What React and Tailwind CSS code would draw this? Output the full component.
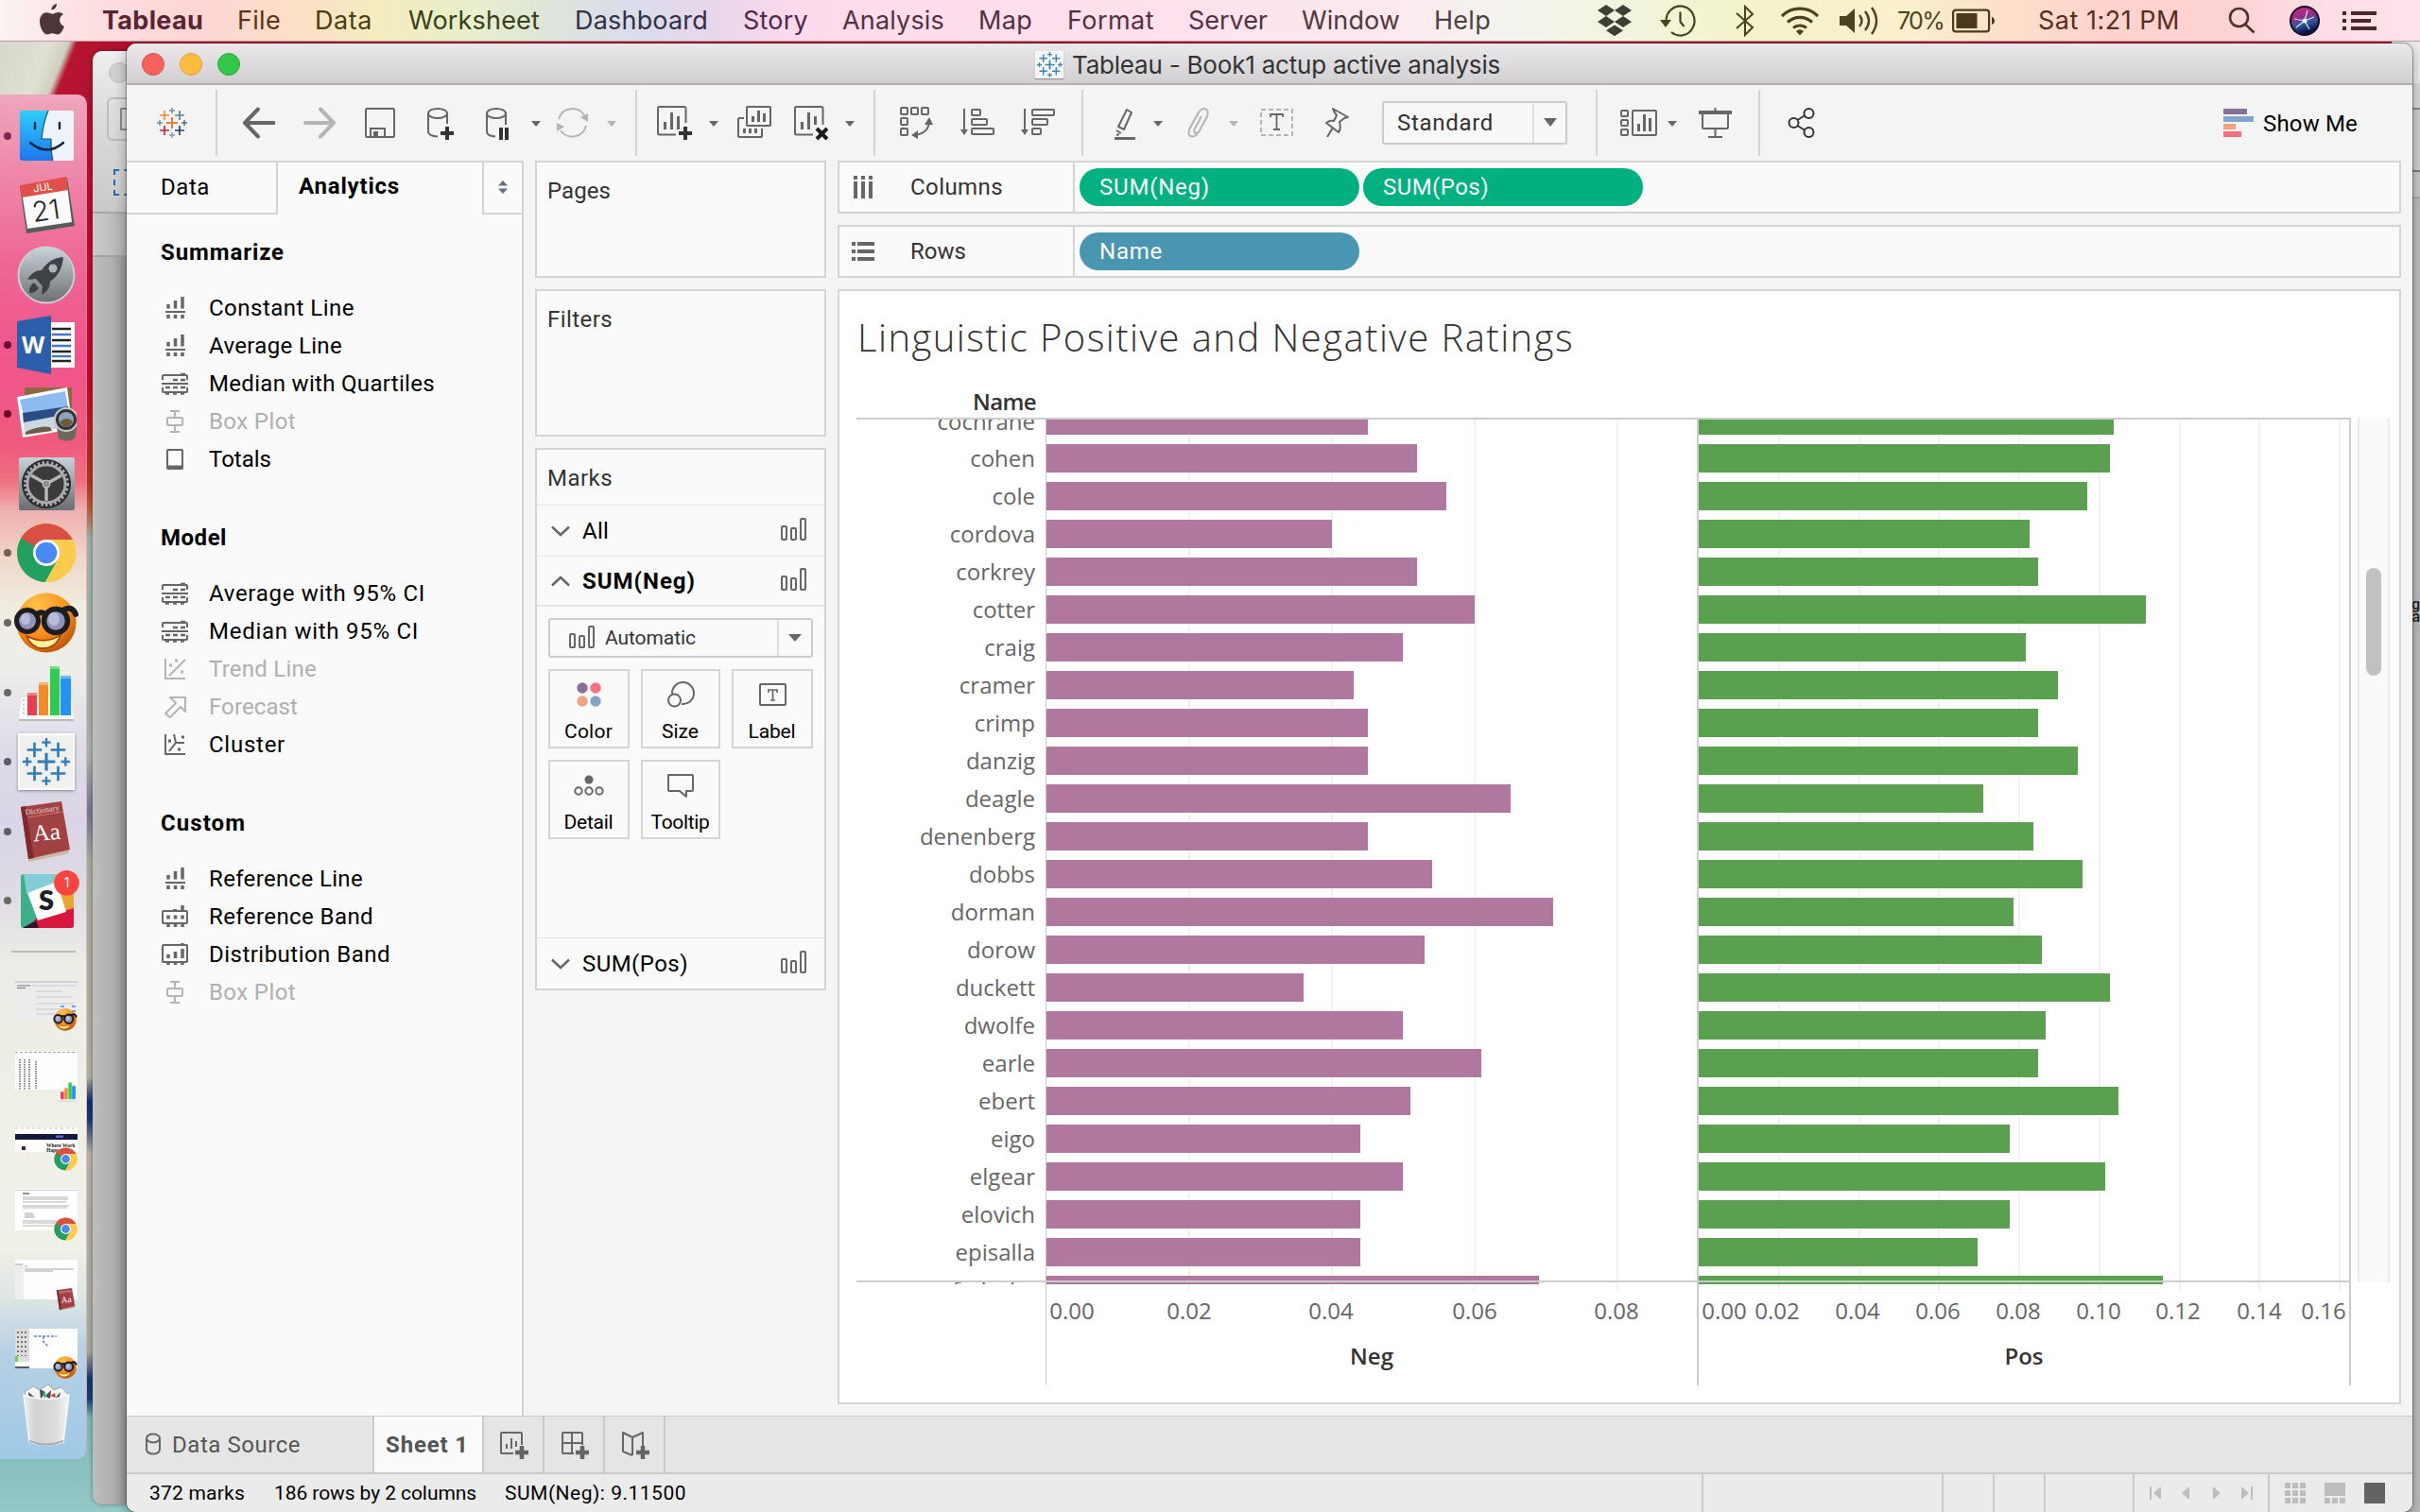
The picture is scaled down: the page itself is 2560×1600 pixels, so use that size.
import React, { useLayoutEffect, useRef, useState } from "react";

/* Single-line label whose tracking is set so that it fills `w` pixels. */
function T({ w, className = "", children }) {
  const ref = useRef(null);
  const [ls, setLs] = useState(0);
  useLayoutEffect(() => {
    const natural = ref.current.getBoundingClientRect().width;
    setLs((w + 2 - natural) / String(children).length);
  }, []);
  return (
    <span className={"block shrink-0 whitespace-nowrap " + className} style={{ width: w }}>
      <span ref={ref} className="-ml-px inline-block" style={{ letterSpacing: ls }}>
        {children}
      </span>
    </span>
  );
}

const G = "#666666";
const L = "#b4b4b4";

/* ---------- shared glyphs ---------- */

function Pluses({ colors, className }) {
  const pts = [
    [16, 16, 6, 2],
    [8, 8, 5, 1.7],
    [24, 8, 5, 1.7],
    [8, 24, 5, 1.7],
    [24, 24, 5, 1.7],
    [16, 3, 3, 1.5],
    [16, 29, 3, 1.5],
    [3, 16, 3, 1.5],
    [29, 16, 3, 1.5],
  ];
  return (
    <svg viewBox="0 0 32 32" className={className}>
      {pts.map(([x, y, r, s], i) => (
        <path key={i} d={`M${x - r} ${y}H${x + r}M${x} ${y - r}V${y + r}`} stroke={colors[i % colors.length]} strokeWidth={s} fill="none" />
      ))}
    </svg>
  );
}

const LOGO = ["#eb7b30", "#e8952c", "#4f8296", "#c8203a", "#1e3f76", "#7099a6", "#8d92b5", "#7099a6", "#5b6591"];

function I({ w, className = "", color = G, children }) {
  return (
    <svg width={w} height="48" viewBox={`0 0 ${w} 48`} fill="none" stroke={color} strokeWidth="2" className={"shrink-0 " + className}>
      {children}
    </svg>
  );
}

function Caret({ className = "", color = G }) {
  return (
    <svg width="10" height="48" viewBox="0 0 10 48" className={"shrink-0 " + className}>
      <path d="M0 22H10L5 28Z" fill={color} />
    </svg>
  );
}

const Sep = ({ className = "" }) => <div className={"h-[70px] w-[2px] shrink-0 bg-[#d4d4d4] " + className} />;

function BarsIcon({ className = "" }) {
  return (
    <svg width="28" height="26" viewBox="0 0 28 26" fill="none" stroke={G} strokeWidth="2" className={"shrink-0 " + className}>
      <rect x="1" y="10" width="5" height="14" rx="1" />
      <rect x="11" y="12" width="5" height="12" rx="1" />
      <rect x="21" y="2" width="5" height="22" rx="1" />
    </svg>
  );
}

/* ---------- menu bar ---------- */

function MenuBar() {
  return (
    <div className="absolute inset-x-0 top-0 flex h-[44px] items-center border-b border-[#b99aa5] bg-[linear-gradient(90deg,#faf3f0_0px,#fde0e2_90px,#fed5d6_200px,#fddcc8_290px,#f5ecc0_400px,#e8efcb_500px,#dbe3de_600px,#dadcec_680px,#ead6ea_760px,#fddbec_850px,#ffe1ee_1200px,#fbe8ee_1450px,#f4f4ee_1600px,#f2f4de_1720px,#f4f3c9_1850px,#faf0cc_2010px,#fddfca_2130px,#fed3cc_2220px,#fed2d4_2350px,#ffdde6_2460px,#ffe3ec_2560px)] pt-[1px] font-['Inter'] text-[27px] leading-[42px] text-[#3f2a31]">
      <svg width="28" height="34" viewBox="0 0 28 34" className="-mt-[4px] ml-[41px] shrink-0" fill="#4d3539">
        <path d="M19 1c.3 3-2.500 6.500-5.500 6.500C13 4.500 16 1.500 19 1zM26 12c-6 3.500-4.500 11 1 13-1.500 4-4 8.500-7 8.500-2 0-3-1.300-5.500-1.300S10.500 33.500 9 33.500C5 33.500 1 26 1 19.500c0-6 3.800-9.300 7.500-9.300 2.400 0 4.300 1.600 5.800 1.600 1.400 0 3.600-1.800 6.500-1.800 1.800 0 4 .8 5.200 2z" />
      </svg>
      <T w={105} className="ml-[40px] font-bold text-[#5a2430]">Tableau</T>
      <T w={44} className="ml-[38px] text-[#5c3418]">File</T>
      <T w={59} className="ml-[38px] text-[#4b3d10]">Data</T>
      <T w={137} className="ml-[40px] text-[#38401c]">Worksheet</T>
      <T w={139} className="ml-[39px] text-[#32304a]">Dashboard</T>
      <T w={67} className="ml-[39px] text-[#50284a]">Story</T>
      <T w={106} className="ml-[38px] text-[#56303f]">Analysis</T>
      <T w={55} className="ml-[38px] text-[#56303f]">Map</T>
      <T w={90} className="ml-[39px] text-[#56303f]">Format</T>
      <T w={82} className="ml-[38px] text-[#56303f]">Server</T>
      <T w={102} className="ml-[38px] text-[#543840]">Window</T>
      <T w={58} className="ml-[38px] text-[#4c4344]">Help</T>
      <svg width="38" height="34" viewBox="0 0 38 34" className="ml-[113px] shrink-0" fill="#3d3f33">
        <path d="M10 0l9 6-9 6-9-6zM28 0l9 6-9 6-9-6zM10 12l9 6-9 6-9-6zM28 12l9 6-9 6-9-6zM19 21.500l9 5.700-9 6-9-6z" />
      </svg>
      <svg width="38" height="36" viewBox="0 0 38 36" className="ml-[29px] shrink-0" fill="none" stroke="#46451c" strokeWidth="2.200">
        <path d="M6.500 18A15 15.500 0 1 1 12 30M21.500 8.500V19l4 5" />
        <path d="M0 17h12L6 25z" fill="#46451c" stroke="none" />
      </svg>
      <svg width="20" height="34" viewBox="0 0 20 34" className="ml-[42px] shrink-0" fill="none" stroke="#46451c" strokeWidth="2">
        <path d="M1 9l17 15-8 8V2l8 8L1 25" />
      </svg>
      <svg width="42" height="32" viewBox="0 0 42 32" className="ml-[27px] shrink-0" fill="none" stroke="#4b4320" strokeWidth="3.200">
        <path d="M2 11a27 27 0 0 1 38 0M8 17.500a19 19 0 0 1 26 0M14 23.500a11 11 0 0 1 14 0" />
        <path d="M17 27a5.500 5.500 0 0 1 8 0l-4 4.500z" fill="#4b4320" stroke="none" />
      </svg>
      <svg width="42" height="32" viewBox="0 0 42 32" className="ml-[21px] shrink-0" fill="none" stroke="#4b4320" strokeWidth="2.400">
        <path d="M0 11h7l9-8v26l-9-8H0z" fill="#4b4320" stroke="none" />
        <path d="M21 10q5 6 0 12M27 6q8 10 0 20M34 2q10 14 0 28" />
      </svg>
      <T w={47} className="ml-[20px] text-[25px] text-[#4b4320]">70%</T>
      <svg width="46" height="26" viewBox="0 0 46 26" className="ml-[10px] shrink-0" fill="none" stroke="#4d3c1c" strokeWidth="2.200">
        <rect x="1.100" y="1.600" width="38" height="22.800" rx="3" />
        <rect x="4.500" y="5" width="22" height="16" fill="#4d3c1c" stroke="none" />
        <path d="M42 9c4 1 4 7 0 8z" fill="#4d3c1c" stroke="none" />
      </svg>
      <T w={148} className="ml-[46px] text-[#5a2c1c]">Sat 1:21 PM</T>
      <svg width="30" height="30" viewBox="0 0 30 30" className="ml-[52px] shrink-0" fill="none" stroke="#54302f" strokeWidth="2.600">
        <circle cx="11.500" cy="11.500" r="9.500" />
        <path d="M18 18.500l9.500 9" />
      </svg>
      <svg width="32" height="32" viewBox="0 0 32 32" className="ml-[35px] shrink-0">
        <defs>
          <linearGradient id="siri" x1="0" y1="0" x2="0.300" y2="1">
            <stop offset="0" stopColor="#d0287c" />
            <stop offset="0.400" stopColor="#9b2a86" />
            <stop offset="0.700" stopColor="#2a5a9a" />
            <stop offset="1" stopColor="#101048" />
          </linearGradient>
        </defs>
        <circle cx="16" cy="16" r="16" fill="#140a22" />
        <circle cx="16" cy="16" r="14" fill="url(#siri)" />
        <path d="M16 16L19 5M16 16l10-4M16 16l5 9M16 16l-9 7M16 16L5 14" stroke="#cfeef8" strokeWidth="1.200" />
        <circle cx="16" cy="16" r="2.500" fill="#e8fbff" />
      </svg>
      <svg width="36" height="22" viewBox="0 0 36 22" className="ml-[24px] shrink-0" fill="#4c262d">
        <path d="M0 1h4v4H0zM9 1h27v4H9zM0 9h4v4H0zM9 9h21v4H9zM0 17h4v4H0zM9 17h27v4H9z" />
      </svg>
    </div>
  );
}

/* ---------- dock ---------- */

const Finder = () => (
  <svg viewBox="0 0 64 64" className="size-[64px]">
    <defs>
      <linearGradient id="fnd" x1="0" y1="0" x2="0" y2="1">
        <stop offset="0" stopColor="#2bd0fb" />
        <stop offset="1" stopColor="#1f75ee" />
      </linearGradient>
    </defs>
    <rect x="4" y="5" width="57" height="53" rx="2" fill="#eef3f9" />
    <path d="M6 5H34C29 17 28 25 27 35h10c0 8 0 16 2 23H6q-2 0-2-2V7q0-2 2-2z" fill="url(#fnd)" />
    <path d="M34 5C29 17 28 25 27 35h10c0 8 0 16 2 23" fill="none" stroke="#17508c" strokeWidth="1.200" />
    <path d="M20 18v6M46 18v6M15 39q18 15 35 0" fill="none" stroke="#14263c" strokeWidth="2.400" strokeLinecap="round" />
  </svg>
);
const Calendar = () => (
  <svg viewBox="0 0 64 64" className="size-[64px]">
    <path d="M4 12L54 3 62 54 11 62z" fill="#555b58" />
    <path d="M5 11L53 3l6 47L12 57z" fill="#fbfbfb" />
    <path d="M4 11L53 2l2 14L6 24z" fill="#e0504a" />
    <text x="29" y="17" transform="rotate(-8 29 17)" textAnchor="middle" fontSize="11" fill="#fff" fontFamily="Inter">JUL</text>
    <text x="33" y="48" transform="rotate(-8 33 48)" textAnchor="middle" fontSize="29" fill="#222" fontFamily="Inter" fontWeight="300">21</text>
  </svg>
);
const Rocket = () => (
  <svg viewBox="0 0 64 64" className="size-[64px]">
    <defs>
      <linearGradient id="rk" x1="0" y1="0" x2="0" y2="1">
        <stop offset="0" stopColor="#c8d2d8" />
        <stop offset="1" stopColor="#6d7072" />
      </linearGradient>
    </defs>
    <circle cx="32" cy="32" r="29.500" fill="url(#rk)" stroke="#c9cfd2" strokeWidth="2" />
    <path d="M50 13c-10 1-17 5-23 14-6 0-11 3-15 10l9-1 7 8-1 9c7-4 9-9 9-14 10-7 13-16 14-26z" fill="#3d4347" />
    <circle cx="39" cy="25" r="4.500" fill="#aab4b9" />
    <path d="M19 40c-4 3-5 6-5 11 5 0 8-2 10-5z" fill="#3d4347" />
  </svg>
);
const Word = () => (
  <svg viewBox="0 0 64 64" className="size-[64px]">
    <rect x="36" y="8" width="26" height="48" fill="#fff" />
    <path d="M38 15H58M38 27H58M38 39H58M38 49H58" stroke="#222" strokeWidth="2.500" />
    <path d="M38 21H58M38 33H58M38 44H58" stroke="#3f79c4" strokeWidth="2.500" />
    <path d="M1 7L37 1V63L1 56z" fill="#2b5fae" />
    <text x="18" y="41" textAnchor="middle" fontSize="25" fontWeight="700" fill="#fff" fontFamily="Open Sans">W</text>
  </svg>
);
const Preview = () => (
  <svg viewBox="0 0 64 64" className="size-[64px]">
    <path d="M9 4H59V50H9z" fill="#8a6a3e" />
    <path d="M1 14L54 4l6 44L7 57z" fill="#fff" />
    <path d="M4 17L52 8l3 18L8 34z" fill="#8fbcf0" />
    <path d="M7 31L55 24l1 11L8 43z" fill="#2b4d86" />
    <path d="M8 41l47-9 2 13-48 9z" fill="#cbd8e2" />
    <path d="M10 51q16-7 26-5l2 4-28 4z" fill="#6d5c4a" />
    <path d="M42 40H66l-4 18q-9 5-17 0z" fill="#6c665d" />
    <circle cx="53" cy="38" r="12" fill="#333" stroke="#c9c9c9" strokeWidth="2" />
    <circle cx="53" cy="38" r="8" fill="#8ea3bd" />
    <path d="M46 40q8-6 14 0-3 6-7 6t-7-6z" fill="#70593d" />
  </svg>
);
const Settings = () => (
  <svg viewBox="0 0 64 64" className="size-[64px]">
    <defs>
      <linearGradient id="st" x1="0" y1="0" x2="0" y2="1">
        <stop offset="0" stopColor="#c6d2d8" />
        <stop offset="1" stopColor="#6c6e70" />
      </linearGradient>
    </defs>
    <rect x="3" y="4" width="59" height="56" rx="2" fill="url(#st)" />
    <circle cx="32" cy="32" r="26" fill="#2a2b2c" />
    <circle cx="32" cy="32" r="20" fill="none" stroke="#a9abac" strokeWidth="3" />
    <circle cx="32" cy="32" r="22.500" fill="none" stroke="#a9abac" strokeWidth="3" strokeDasharray="2.500 2.300" />
    <circle cx="32" cy="32" r="18" fill="#3a3b3c" />
    <path d="M32 32L16 23M32 32L48 23M32 32V50" stroke="#b4b6b7" strokeWidth="3.500" />
    <circle cx="32" cy="32" r="4" fill="#8b8d8e" stroke="#d0d0d0" />
  </svg>
);
const Chrome = ({ className = "size-[64px]" }) => (
  <svg viewBox="0 0 64 64" className={className}>
    <circle cx="32" cy="32" r="31" fill="#fdcb4b" />
    <path d="M32 32L58.800 16.500A31 31 0 0 0 5.200 16.500L18 40z" fill="#da4f44" />
    <path d="M32 18H60A31 31 0 0 0 57 14L32 12z" fill="#da4f44" />
    <path d="M5.200 16.500A31 31 0 0 0 31 63L44 40 32 32z" fill="#22a060" />
    <path d="M5.200 16.500L20 42 32 32 18 26z" fill="#22a060" />
    <path d="M32 18h28a31 31 0 0 1-29 45l13-24z" fill="#fdcb4b" />
    <circle cx="32" cy="32" r="14" fill="#fff" />
    <circle cx="32" cy="32" r="11.300" fill="#4a8af4" />
  </svg>
);
const Shades = ({ className = "size-[70px]" }) => (
  <svg viewBox="0 0 70 66" className={className}>
    <defs>
      <radialGradient id="shd" cx="0.350" cy="0.200" r="0.900">
        <stop offset="0" stopColor="#ffc24a" />
        <stop offset="0.550" stopColor="#fb8f1d" />
        <stop offset="1" stopColor="#b34a00" />
      </radialGradient>
    </defs>
    <circle cx="35" cy="33" r="31.500" fill="url(#shd)" />
    <path d="M14 47q20 10 36-1-5 14-19 14-11 0-17-13z" fill="#fff3a0" stroke="#a33d00" strokeWidth="1.500" />
    <circle cx="15" cy="31" r="11.500" fill="#9394bd" stroke="#1d1d1f" strokeWidth="5" />
    <circle cx="45" cy="31" r="12.500" fill="#9394bd" stroke="#1d1d1f" strokeWidth="5.500" />
    <path d="M25 24q6-4 9 1M52 20q10-6 14 4" fill="none" stroke="#1d1d1f" strokeWidth="6" strokeLinecap="round" />
    <ellipse cx="13" cy="29" rx="5" ry="6" fill="#b9bcda" />
    <ellipse cx="43" cy="29" rx="6" ry="7" fill="#b9bcda" />
  </svg>
);
const Numbers = ({ className = "size-[64px]" }) => (
  <svg viewBox="0 0 64 64" className={className}>
    <path d="M6 37H58L61 60H3z" fill="#fdfdfd" />
    <path d="M3 60H61v2H3z" fill="#b9b9b9" />
    <path d="M12 32H22V56H12z" fill="#ee3a50" />
    <path d="M24 21H34V56H24z" fill="#f58a26" />
    <path d="M36 4H46V56H36z" fill="#2fcb4f" />
    <path d="M47 14H58V56H47z" fill="#2493f4" />
    <path d="M12 32H22v3H12zM24 21H34v3H24zM36 4H46v3H36zM47 14H58v3H47z" fill="#fff" opacity="0.350" />
    <path d="M8 39v16" stroke="#999" strokeDasharray="2 2.500" />
  </svg>
);
const TableauTile = () => (
  <div className="flex size-[60px] items-center justify-center border-2 border-white bg-[#f0f0f0] shadow-[0_1px_3px_rgba(0,0,0,0.4)]">
    <Pluses colors={["#2f7db5"]} className="size-[50px]" />
  </div>
);
const Dictionary = ({ className = "size-[64px]" }) => (
  <svg viewBox="0 0 64 64" className={className}>
    <path d="M12 60L56 51v4L14 64z" fill="#c9b9a0" />
    <path d="M5 6L48 0l9 51-44 10z" fill="#a24143" />
    <path d="M5 6l5-1 9 55-6 1z" fill="#7c2a2d" />
    <path d="M12 17L50 11" stroke="#c47a7a" />
    <text x="28" y="12" transform="rotate(-8 28 12)" textAnchor="middle" fontSize="8.500" fill="#ecd9d9" fontFamily="Liberation Serif">Dictionary</text>
    <text x="33" y="41" transform="rotate(-6 33 41)" textAnchor="middle" fontSize="25" fill="#fff" fontFamily="Liberation Serif">Aa</text>
  </svg>
);
const Slack = () => (
  <svg viewBox="0 0 70 64" className="h-[64px] w-[70px]">
    <g>
      <rect x="8" y="4" width="56" height="57" rx="3" fill="#3cb08a" />
      <path d="M11 4H50L46 16 14 24z" fill="#82cdd8" />
      <path d="M46 4H61q3 0 3 3V44L52 42 42 12z" fill="#e9a52d" />
      <path d="M64 40V58q0 3-3 3H24L22 52z" fill="#d6183f" />
      <path d="M10 61l14-8 3 8z" fill="#3a1230" />
      <path d="M15 24L46 12 56 44 26 53z" fill="#fff" />
    </g>
    <text x="35" y="42" textAnchor="middle" fontSize="29" fontWeight="800" fill="#1b1f23" fontFamily="Lato">S</text>
    <circle cx="56.500" cy="13.300" r="13.300" fill="#fb4440" />
    <text x="56.500" y="18" textAnchor="middle" fontSize="14" fill="#fff" fontFamily="Inter">1</text>
  </svg>
);
const Trash = () => (
  <svg viewBox="0 0 50 66" className="h-[66px] w-[50px]">
    <defs>
      <linearGradient id="bin" x1="0" y1="0" x2="1" y2="0">
        <stop offset="0" stopColor="#f3f3f3" />
        <stop offset="0.250" stopColor="#d2d2d2" />
        <stop offset="0.700" stopColor="#dcdcdc" />
        <stop offset="1" stopColor="#f5f5f5" />
      </linearGradient>
    </defs>
    <path d="M2 8l9-6 7 4 9-6 6 6 8-3 7 8-4 8H6z" fill="#f5f5f5" stroke="#999" strokeWidth="0.800" />
    <path d="M6 8l7 6-6 2zM18 5l6 3-5 8zM30 6l-1 10-5-4zM40 8l-7 8 5 1z" fill="#4a4a4a" />
    <path d="M21 8l5 3-3 4z" fill="#3bb58a" />
    <path d="M29 12l5-3 1 5z" fill="#d0402c" />
    <path d="M1 11q24 9 48 0L43 61q-18 6-36 0z" fill="url(#bin)" stroke="#f8f8f8" strokeWidth="1.500" />
    <path d="M7 59q18 7 36 0v2q-18 7-36 0z" fill="#a8a8a8" />
  </svg>
);

function Thumb({ kind }) {
  return (
    <svg viewBox="0 0 66 46" className="h-[46px] w-[66px]">
      {kind === "form" && (
        <g>
          <path d="M0 2H66V40H0z" fill="#ececec" />
          <path d="M0 2H66" stroke="#d2d2d2" strokeWidth="2" />
          <path d="M18 6H64M22 12H50M22 18H60M22 25H62M22 31H56M22 36H60" stroke="#c4c8cf" strokeWidth="1.200" />
          <path d="M2 6h14M2 8.500h9" stroke="#777" />
          <path d="M48 28h4M60 28h4M48 33h4M60 33h4" stroke="#3f86e8" strokeWidth="1.500" />
        </g>
      )}
      {kind === "sheet" && (
        <g>
          <path d="M0 1H66V42H0z" fill="#fdfdfd" />
          <path d="M0 2.500H66" stroke="#9aa" strokeDasharray="3 2" />
          <path d="M5 10V42M10 10V42M15 10V42M22 12V42" stroke="#8a8a8a" strokeWidth="2" strokeDasharray="1.500 1" />
        </g>
      )}
      {kind === "site" && (
        <g>
          <path d="M0 9H66V35H0z" fill="#fff" />
          <path d="M0 10H66" stroke="#bbb" strokeDasharray="3 3" />
          <path d="M0 16H66v6H0z" fill="#15183c" />
          <rect x="43" y="17.500" width="8" height="2.500" fill="#5a62d8" />
          <rect x="7" y="29" width="4" height="4" fill="#4a2040" />
          <text x="33" y="30" fontSize="5.500" fontWeight="700" fill="#222" fontFamily="Liberation Serif">Where Work</text>
          <text x="33" y="35" fontSize="5.500" fontWeight="700" fill="#222" fontFamily="Liberation Serif">Happens</text>
        </g>
      )}
      {kind === "doc" && (
        <g>
          <path d="M0 0H66V44H0z" fill="#fff" />
          <path d="M0 1.500H66" stroke="#ccc" />
          <path d="M8 5h7" stroke="#222" />
          <path d="M8 9H56M8 11H56M8 14H54M8 18H57M8 20H55M8 34H55M8 36H55M8 39H50" stroke="#aaa" strokeWidth="0.900" />
          <path d="M10 26h9M10 28h10M10 30h11" stroke="#999" strokeWidth="0.900" />
        </g>
      )}
      {kind === "dict" && (
        <g>
          <path d="M0 1H66V43H0z" fill="#fdfdfd" />
          <path d="M0 6H9V43H0z" fill="#eee" />
          <path d="M0 6H8M10 8h3M10 11H62M10 13H40" stroke="#999" strokeWidth="0.900" />
        </g>
      )}
      {kind === "flow" && (
        <g>
          <path d="M0 1H66V43H0z" fill="#fff" />
          <path d="M0 1H15V36H0z" fill="#dcdcdc" />
          <path d="M3 4V30M7 4V30M11 4V30" stroke="#555" strokeWidth="1.500" strokeDasharray="2 3" />
          <path d="M20 9H44M30 9v6l5 5" stroke="#5d86c0" strokeWidth="1.500" strokeDasharray="3 1.500" fill="none" />
          <path d="M0 30h3v6H0z" fill="#6fcb4a" />
          <path d="M0 42H15" stroke="#222" strokeWidth="1.500" />
        </g>
      )}
    </svg>
  );
}

function DockItem({ dot, dotClass = "bg-[#6b6763]", children }) {
  return (
    <div className="flex h-[73.6px] w-[92px] shrink-0 items-center">
      <div className="flex w-[16px] shrink-0 justify-center">{dot && <div className={"size-[8px] rounded-full " + dotClass} />}</div>
      <div className="-mx-[4px] flex w-[74px] shrink-0 items-center justify-center">{children}</div>
    </div>
  );
}

function DockThumb({ kind, badge }) {
  return (
    <div className="flex h-[73.6px] w-[92px] shrink-0 items-start pl-[16px] pt-[11px]">
      <div className="relative">
        <Thumb kind={kind} />
        <div className="absolute -bottom-[9px] right-0">{badge}</div>
      </div>
    </div>
  );
}

function Dock() {
  const small = "size-[25px]";
  return (
    <div className="absolute left-0 top-[100px] flex h-[1444px] w-[92px] flex-col rounded-r-[10px] border-r border-[#c9a5ae]/60 bg-[linear-gradient(180deg,#efa6bb_0px,#ee85a8_90px,#ef6696_180px,#f0558a_280px,#f05a7e_370px,#ee7280_410px,#efb0b0_440px,#efd6c8_490px,#efece0_540px,#ededea_610px,#dfdce8_690px,#d9d5e6_770px,#dfdce4_850px,#eeece6_920px,#f0f0e6_1100px,#f0f0e6_1220px,#dfe7e4_1270px,#b7d0e4_1330px,#9fcae6_1440px)] pt-[7px]">
      <DockItem dot dotClass="bg-[#7a2848]"><Finder /></DockItem>
      <DockItem><Calendar /></DockItem>
      <DockItem><Rocket /></DockItem>
      <DockItem dot dotClass="bg-[#6d0f30]"><Word /></DockItem>
      <DockItem dot dotClass="bg-[#6d0820]"><Preview /></DockItem>
      <DockItem><Settings /></DockItem>
      <DockItem dot dotClass="bg-[#70605a]"><Chrome /></DockItem>
      <DockItem dot><Shades /></DockItem>
      <DockItem dot><Numbers /></DockItem>
      <DockItem dot dotClass="bg-[#5f5d68]"><TableauTile /></DockItem>
      <DockItem dot dotClass="bg-[#5f5d68]"><Dictionary /></DockItem>
      <DockItem dot><Slack /></DockItem>
      <div className="ml-[12px] mt-[16px] h-[2px] w-[68px] shrink-0 bg-[#bdbcb6]" />
      <div className="h-[18px] shrink-0" />
      <DockThumb kind="form" badge={<Shades className="size-[26px]" />} />
      <DockThumb kind="sheet" badge={<Numbers className="size-[22px]" />} />
      <DockThumb kind="site" badge={<Chrome className={small} />} />
      <DockThumb kind="doc" badge={<Chrome className={small} />} />
      <DockThumb kind="dict" badge={<Dictionary className="size-[24px]" />} />
      <DockThumb kind="flow" badge={<Shades className="size-[26px]" />} />
      <div className="-mt-[3px] ml-[24px] shrink-0"><Trash /></div>
    </div>
  );
}

/* ---------- window behind ---------- */

function BackWindow() {
  return (
    <div className="absolute left-[98px] top-[54px] flex h-[1538px] w-[80px] flex-col overflow-hidden rounded-[10px] bg-[linear-gradient(90deg,#bdbdbd_0px,#b2b2b2_18px,#979797_36px)] shadow-[0_0_4px_rgba(0,0,0,0.4)]">
      <div className="h-[172px] shrink-0 border-b-2 border-[#a6a6a6] bg-[linear-gradient(180deg,#efefef,#dedede_60px,#c9c9c9)]">
        <div className="ml-[17px] mt-[12px] size-[22px] rounded-full border border-[#bdbdbd] bg-[#d0d0d0]" />
        <div className="ml-[15px] mt-[15px] h-[46px] w-[60px] rounded-[6px] border-2 border-[#bcbcbc] pl-[12px] pt-[9px]">
          <div className="h-[24px] w-[20px] border-2 border-[#8c8c8c]" />
        </div>
        <div className="ml-[22px] mt-[30px] h-[28px] w-[40px] border-2 border-dashed border-[#2369b8]" />
      </div>
      <div className="h-[46px] shrink-0 border-b-2 border-[#a2a2a2] bg-[linear-gradient(90deg,#cbcbcb,#b2b2b2_36px)]" />
    </div>
  );
}

/* ---------- toolbar ---------- */

function Toolbar() {
  return (
    <div className="flex h-[80px] shrink-0 items-center bg-[#f4f4f4]">
      <Pluses colors={LOGO} className="ml-[32px] size-[32px] shrink-0" />
      <Sep className="ml-[30px]" />
      <I w={34} className="ml-[27px]">
        <path d="M33 24H2M16 9.500L2 24l14 14.500" strokeWidth="4" strokeLinecap="round" strokeLinejoin="round" />
      </I>
      <I w={34} className="ml-[30px]" color={L}>
        <path d="M2 24H32M18 9.500L32 24 18 38.500" strokeWidth="4" strokeLinecap="round" strokeLinejoin="round" />
      </I>
      <I w={32} className="ml-[31px]">
        <rect x="1" y="9" width="30" height="30" rx="1" />
        <path d="M6 39V30H21V39" />
        <path d="M9 33h5v5H9z" fill={G} stroke="none" />
      </I>
      <I w={28} className="ml-[34px]">
        <ellipse cx="11" cy="14" rx="10" ry="5" />
        <path d="M1 14V34q1 4 10 4.500M21 14V25" />
        <path d="M21 28v14M14 35h14" stroke="#333" strokeWidth="4" />
      </I>
      <I w={24} className="ml-[34px]">
        <ellipse cx="11" cy="14" rx="10" ry="5" />
        <path d="M1 14V34q1 4 9 4.500M21 14V26" />
        <path d="M16 29v13M22 29v13" stroke="#333" strokeWidth="4" />
      </I>
      <Caret className="ml-[24px]" />
      <I w={33} className="ml-[17px]" color={L}>
        <path d="M2 20A15 15 0 0 1 29 16M31 27A15 15 0 0 1 4 32" />
        <path d="M33 14v9l-8-5zM0 24v9l8-5z" fill={L} stroke="none" />
      </I>
      <Caret className="ml-[20px]" color={L} />
      <Sep className="ml-[20px]" />
      <I w={37} className="ml-[21px]">
        <path d="M20 36.500H2.500Q1 36.500 1 35V8.500Q1 7 2.500 7H29Q30.500 7 30.500 8.500V24" />
        <path d="M8.500 23v8M15.500 13v18M22.500 17v14" strokeWidth="3" />
        <path d="M30 28v14M23 35h14" stroke="#333" strokeWidth="4" />
      </I>
      <Caret className="ml-[18px]" />
      <I w={36} className="ml-[20px]">
        <rect x="10" y="7" width="25" height="20" rx="1" />
        <path d="M7 19H2Q1 19 1 20V38Q1 39 2 39H25Q26 39 26 38V30" />
        <path d="M16.500 17v6M22.500 11v12M28.500 14v9M7.500 30v5M13.500 30v5M19.500 30v5" strokeWidth="3" />
      </I>
      <I w={36} className="ml-[24px]">
        <path d="M20 36.500H2.500Q1 36.500 1 35V8.500Q1 7 2.500 7H29Q30.500 7 30.500 8.500V26" />
        <path d="M8.500 23v8M15.500 13v18M22.500 17v9" strokeWidth="3" />
        <path d="M24 30l11 11M35 30L24 41" stroke="#1c1c1c" strokeWidth="4" />
      </I>
      <Caret className="ml-[18px]" />
      <Sep className="ml-[20px]" />
      <I w={35} className="ml-[26px]">
        <rect x="1" y="8" width="7" height="7" rx="1" />
        <rect x="12" y="8" width="7" height="7" rx="1" />
        <rect x="23" y="8" width="7" height="7" rx="1" />
        <rect x="1" y="19" width="7" height="7" rx="1" />
        <rect x="1" y="30" width="7" height="7" rx="1" />
        <path d="M16 37q14-2 15-14" />
        <path d="M26 26l5-8 4 8zM12 37l7-5v9z" fill={G} stroke="none" />
      </I>
      <I w={36} className="ml-[29px]">
        <path d="M4 9V34" />
        <path d="M0 31h8l-4 6z" fill={G} stroke="none" />
        <rect x="12" y="10" width="9" height="6" rx="1" />
        <rect x="12" y="20" width="16" height="6" rx="1" />
        <rect x="12" y="30" width="23" height="6" rx="1" />
      </I>
      <I w={36} className="ml-[28px]">
        <path d="M4 9V34" />
        <path d="M0 31h8l-4 6z" fill={G} stroke="none" />
        <rect x="12" y="10" width="23" height="6" rx="1" />
        <rect x="12" y="20" width="16" height="6" rx="1" />
        <rect x="12" y="30" width="9" height="6" rx="1" />
      </I>
      <Sep className="ml-[28px]" />
      <I w={22} className="ml-[33px]">
        <path d="M13 10l5 3-8 18-6-3z" strokeLinejoin="round" />
        <path d="M2 32l5 3M2 37l3-1" />
        <path d="M0 40.500H22" strokeWidth="3" />
      </I>
      <Caret className="ml-[19px]" />
      <I w={23} className="ml-[26px]" color={L}>
        <path d="M15 17L7.500 31q-1 4 2 4 2 0 3-2l8.500-16q2-7-3-8-4 0-6 4L2.500 30q-3 8 3 8.500 3 0 5-3" />
      </I>
      <Caret className="ml-[21px]" color={L} />
      <I w={35} className="ml-[23px]">
        <rect x="1" y="10" width="33" height="27" stroke={L} strokeDasharray="5 3" />
        <path d="M11 18V15H24V18M17.500 15V31M14 31h7" strokeWidth="1.800" />
      </I>
      <I w={27} className="ml-[32px]">
        <path d="M10 9l16 9-4 1-5 4q2 8-1 11L3 24q4-3 8-2l3-6q-3-3-4-7zM10 29L4 39" strokeLinejoin="round" />
      </I>
      <div className="-mt-[1px] ml-[35px] flex h-[46px] w-[196px] shrink-0 items-center rounded-[3px] border-2 border-[#cccccc] bg-[#f8f8f8]">
        <T w={100} className="ml-[15px] mt-[1px] text-[24px] leading-[42px] text-[#333]">Standard</T>
        <div className="ml-[42px] h-[42px] w-[2px] bg-[#dedede]" />
        <svg width="14" height="9" viewBox="0 0 14 9" className="ml-[10px]"><path d="M0 0H14L7 9z" fill={G} /></svg>
      </div>
      <Sep className="ml-[30px]" />
      <I w={39} className="ml-[24px]">
        <rect x="1" y="11" width="7" height="6" rx="1" />
        <rect x="1" y="21" width="7" height="6" rx="1" />
        <rect x="1" y="31" width="7" height="6" rx="1" />
        <rect x="13" y="11" width="25" height="26" rx="1" />
        <path d="M19.500 25v8M25.500 15v18M31.500 19v14" strokeWidth="3" />
      </I>
      <Caret className="ml-[11px]" />
      <I w={35} className="ml-[23px]">
        <path d="M0 13H35" strokeWidth="4" />
        <path d="M17.500 8v4M4 14V28.500Q4 30 5.500 30H29.500Q31 30 31 28.500V14M17.500 30v9M10 39H25" />
      </I>
      <Sep className="ml-[28px]" />
      <I w={29} className="ml-[29px]" color="#333">
        <circle cx="6.500" cy="24" r="5" />
        <circle cx="22.500" cy="14" r="5" />
        <circle cx="22.500" cy="34" r="5" />
        <path d="M10.500 21l8-5M10.500 27l8 5" />
      </I>
      <div className="ml-[432px] flex w-[32px] shrink-0 flex-col gap-[2px]">
        <div className="h-[6px] w-[25px] bg-[#86719a]" />
        <div className="h-[6px] w-[32px] bg-[#82a5cb]" />
        <div className="h-[6px] w-[13px] bg-[#f2a37a]" />
        <div className="h-[6px] w-[19px] bg-[#f8707f]" />
      </div>
      <T w={98} className="ml-[11px] mt-[1px] text-[24px] leading-[42px] text-black">Show Me</T>
    </div>
  );
}

/* ---------- analytics pane ---------- */

function AIcon({ kind, color }) {
  return (
    <svg width="28" height="26" viewBox="0 0 28 26" fill="none" stroke={color} strokeWidth="2" className="shrink-0">
      {kind === "line" && (
        <g>
          <path d="M7 9v4.500M14.500 5v8.500M22 1v12.500M7 20v4M14.500 20v4M22 20v4" strokeWidth="3.500" />
          <path d="M4 17H25" />
        </g>
      )}
      {kind === "quart" && (
        <g>
          <path d="M1 9V4.500Q1 4 2 4H26Q27 4 27 5V9M1 17V21Q1 22 2 22H26Q27 22 27 21V17M0 13H28" />
          <path d="M12 9h5M20 9h5M4 17h5M12 17h5M20 17h5M20 3h5M4 23.500h4M12 23.500h4M20 23.500h4" strokeWidth="2.500" />
        </g>
      )}
      {kind === "box" && (
        <g>
          <rect x="6" y="9" width="16" height="8" rx="1" />
          <path d="M14 2v7M14 17v7M9 2h10M9 24h10" />
        </g>
      )}
      {kind === "totals" && (
        <g>
          <rect x="6" y="3" width="16" height="20" rx="1" />
          <path d="M6 21.500H22" strokeWidth="4" />
        </g>
      )}
      {kind === "trend" && (
        <g>
          <path d="M4 2V23H25M8 20L25 3" />
          <path d="M8 9h3M14 4h3M20 16h3" strokeWidth="3" />
        </g>
      )}
      {kind === "forecast" && (
        <path d="M9 3H25V18L20 13 9 24 4 20 15 9z" strokeLinejoin="round" />
      )}
      {kind === "cluster" && (
        <g>
          <path d="M4 2V23H25M8 20L15 11H24M15 11L13 2" />
          <path d="M7 9h3M21 5h3M17 18h3" strokeWidth="3" />
        </g>
      )}
      {kind === "band" && (
        <g>
          <rect x="1" y="7" width="26" height="13" rx="1" />
          <path d="M22 1v6M14 5v2M7 11.500v4M14.500 11.500v4M22 11.500v4M7 20v4M14.500 20v4M22 20v4" strokeWidth="3.500" />
        </g>
      )}
      {kind === "dist" && (
        <g>
          <rect x="1" y="3" width="26" height="18" rx="1" />
          <path d="M7 13v4M14.500 10v7M22 7v10M22 1v2M7 22v2M14.500 22v2M22 22v2" strokeWidth="3.500" />
        </g>
      )}
    </svg>
  );
}

const SECTIONS = [
  ["Summarize", 129, [["line", "Constant Line", 152], ["line", "Average Line", 139], ["quart", "Median with Quartiles", 237], ["box", "Box Plot", 90, true], ["totals", "Totals", 64]]],
  ["Model", 68, [["quart", "Average with 95% CI", 227], ["quart", "Median with 95% CI", 220], ["trend", "Trend Line", 112, true], ["forecast", "Forecast", 92, true], ["cluster", "Cluster", 79]]],
  ["Custom", 88, [["line", "Reference Line", 161], ["band", "Reference Band", 172], ["dist", "Distribution Band", 190], ["box", "Box Plot", 90, true]]],
];

function AnalyticsPane() {
  return (
    <div className="flex w-[420px] shrink-0 flex-col border-r-2 border-[#d4d4d4] bg-[#fafafa] text-[24px] leading-[40px] text-black">
      <div className="flex h-[57px] shrink-0 border-t-2 border-[#d4d4d4]">
        <div className="flex w-[160px] items-center border-b-2 border-r-2 border-[#d4d4d4] pl-[37px]"><T w={50} className="-mt-[2px]">Data</T></div>
        <div className="flex w-[216px] items-center pl-[23px]"><T w={105} className="-mt-[5px] font-bold">Analytics</T></div>
        <div className="flex flex-1 items-center justify-center border-b-2 border-l-2 border-[#d4d4d4]">
          <svg width="10" height="14" viewBox="0 0 10 14" fill="#66707c" className="-mt-[2px]"><path d="M0 5.500L5 0l5 5.500zM0 8.500L5 14l5-5.500z" /></svg>
        </div>
      </div>
      <div className="flex flex-col gap-[43px] pl-[37px] pt-[20px]">
        {SECTIONS.map(([title, tw, items]) => (
          <div key={title} className="flex flex-col">
            <T w={tw} className="mb-[19px] font-bold">{title}</T>
            {items.map(([icon, label, w, off], i) => (
              <div key={i} className={"flex h-[40px] items-center gap-[23px] " + (off ? "text-[#b0b0b0]" : "text-black")}>
                <AIcon kind={icon} color={off ? L : G} />
                <T w={w}>{label}</T>
              </div>
            ))}
          </div>
        ))}
      </div>
    </div>
  );
}

/* ---------- cards ---------- */

const card = "shrink-0 border-2 border-[#d4d4d4] bg-[#fafafa]";

function Chevron({ up }) {
  return (
    <svg width="20" height="12" viewBox="0 0 20 12" fill="none" stroke={G} strokeWidth="2.500" className="shrink-0">
      <path d={up ? "M1 10.500L10 2l9 8.500" : "M1 1.500L10 10l9-8.500"} />
    </svg>
  );
}

function MarkRow({ up, w, bold, className, children }) {
  return (
    <div className={"flex shrink-0 items-center pl-[15px] pr-[18px] text-black " + className}>
      <Chevron up={up} />
      <T w={w} className={"ml-[14px] " + (bold ? "font-bold" : "")}>{children}</T>
      <BarsIcon className="-mt-[3px] ml-auto" />
    </div>
  );
}

function MarkButton({ label, w, children }) {
  return (
    <div className="flex h-[84px] flex-col items-center border-2 border-[#d4d4d4] pt-[10px]">
      <svg width="32" height="30" viewBox="0 0 32 30" fill="none" stroke={G} strokeWidth="2" className="-ml-[1px]">{children}</svg>
      <T w={w} className="-ml-[1px] mt-[9px] text-[21px] leading-[30px] text-black">{label}</T>
    </div>
  );
}

function Cards() {
  return (
    <div className="ml-[12px] flex w-[308px] shrink-0 flex-col gap-[12px] text-[24px] leading-[40px] text-[#333]">
      <div className={card + " h-[124px] pl-[12px] pt-[10px]"}><T w={65}>Pages</T></div>
      <div className={card + " h-[156px] pl-[12px] pt-[10px]"}><T w={67}>Filters</T></div>
      <div className={card + " flex h-[574px] flex-col"}>
        <div className="h-[59px] shrink-0 border-b border-[#e4e4e4] pl-[12px] pt-[10px]"><T w={67}>Marks</T></div>
        <MarkRow w={26} className="h-[54px] border-b border-[#e4e4e4]">All</MarkRow>
        <MarkRow up bold w={118} className="h-[53px] border-b-2 border-[#e4e4e4]">SUM(Neg)</MarkRow>
        <div className="ml-[12px] mt-[12px] flex h-[42px] w-[280px] shrink-0 items-center rounded-[3px] border-2 border-[#cccccc]">
          <BarsIcon className="-mt-[2px] ml-[20px]" />
          <T w={94} className="ml-[11px] text-[21px] leading-[38px]">Automatic</T>
          <div className="ml-auto h-full w-[2px] bg-[#dedede]" />
          <div className="flex w-[34px] justify-center"><svg width="14" height="8" viewBox="0 0 14 8"><path d="M0 0H14L7 8z" fill={G} /></svg></div>
        </div>
        <div className="ml-[12px] mt-[12px] grid grid-cols-[86px_84px_86px] gap-[12px]">
          <MarkButton label="Color" w={49}>
            <g stroke="none">
              <circle cx="9" cy="8" r="5.700" fill="#86719a" /><circle cx="23" cy="8" r="5.700" fill="#f8707f" />
              <circle cx="9" cy="22" r="5.700" fill="#f2a37a" /><circle cx="23" cy="22" r="5.700" fill="#82a5cb" />
            </g>
          </MarkButton>
          <MarkButton label="Size" w={37}>
            <path d="M7 14A11.500 11.500 0 1 1 17 25" /><circle cx="9.500" cy="21" r="6.500" />
          </MarkButton>
          <MarkButton label="Label" w={48}>
            <rect x="3" y="4" width="27" height="22" rx="1" /><path d="M12 13V10h9v3M16.500 10v11M14 21h5" strokeWidth="1.700" />
          </MarkButton>
          <MarkButton label="Detail" w={50}>
            <circle cx="16" cy="9" r="4.500" fill={G} stroke="none" /><circle cx="5" cy="21" r="3.700" /><circle cx="16" cy="21" r="3.700" /><circle cx="27" cy="21" r="3.700" />
          </MarkButton>
          <MarkButton label="Tooltip" w={60}>
            <path d="M3 4H28Q29 4 29 5V20Q29 21 28 21H22V27L15 21H4Q3 21 3 20V5Q3 4 4 4z" strokeLinejoin="round" />
          </MarkButton>
        </div>
        <div className="flex-1" />
        <MarkRow w={110} className="h-[54px] border-t border-[#e4e4e4]">SUM(Pos)</MarkRow>
      </div>
    </div>
  );
}

/* ---------- shelves ---------- */

function Shelf({ label, w, icon, children }) {
  return (
    <div className={card + " flex h-[56px] items-center text-[24px] leading-[40px] text-[#333]"}>
      <svg width="26" height="26" viewBox="0 0 26 26" fill={G} className="ml-[12px] shrink-0">{icon}</svg>
      <T w={w} className="ml-[38px]">{label}</T>
      <div className="ml-auto flex h-full w-[1403px] items-center gap-[4px] border-l-2 border-[#d4d4d4] pl-[5px]">{children}</div>
    </div>
  );
}

function Pill({ className, w, children }) {
  return (
    <div className={"flex h-[40px] w-[296px] items-center rounded-full pl-[22px] text-white " + className}>
      <T w={w}>{children}</T>
    </div>
  );
}

/* ---------- chart ---------- */

const ROWS = [
  ["cochrane", 0.045, 0.104], ["cohen", 0.052, 0.103], ["cole", 0.056, 0.0975], ["cordova", 0.04, 0.083],
  ["corkrey", 0.052, 0.085], ["cotter", 0.06, 0.112], ["craig", 0.05, 0.082], ["cramer", 0.043, 0.09],
  ["crimp", 0.045, 0.085], ["danzig", 0.045, 0.095], ["deagle", 0.065, 0.0713], ["denenberg", 0.045, 0.084],
  ["dobbs", 0.054, 0.0963], ["dorman", 0.071, 0.0788], ["dorow", 0.053, 0.086], ["duckett", 0.036, 0.103],
  ["dwolfe", 0.05, 0.0869], ["earle", 0.061, 0.085], ["ebert", 0.051, 0.1053], ["eigo", 0.044, 0.078],
  ["elgear", 0.05, 0.102], ["elovich", 0.044, 0.078], ["episalla", 0.044, 0.07], ["fedorko", 0.069, 0.1163],
];

function Pane({ idx, scale, barScale, ticks, color, className }) {
  return (
    <div className={"relative h-[924px] shrink-0 " + className}>
      {ticks.map((t) => (
        <div key={t} className="absolute top-0 h-full w-[2px] bg-[#f2f2f2]" style={{ left: t * scale - 1 }} />
      ))}
      <div className="relative h-[915px] overflow-hidden">
        <div className="-mt-[19px] flex flex-col">
          {ROWS.map((r) => (
            <div key={r[0]} className="flex h-[40px] shrink-0 items-center">
              <div className={"h-[30px] " + color} style={{ width: Math.round(r[idx] * barScale) }} />
            </div>
          ))}
        </div>
      </div>
    </div>
  );
}

function Axis({ labels, title, className }) {
  return (
    <div className={"relative h-[100px] shrink-0 " + className}>
      {labels.map(([x, t]) => (
        <div key={t} className="absolute top-[4px] w-[60px] text-center" style={{ left: x - 30 }}>{t}</div>
      ))}
      <div className="pt-[52px] text-center font-semibold text-[#333]">{title}</div>
    </div>
  );
}

function Chart() {
  return (
    <div className="flex h-[1180px] shrink-0 flex-col border-2 border-[#d4d4d4] bg-white font-['Open_Sans'] text-[24px] leading-[34px] text-[#666]">
      <T w={756} className="ml-[20px] mt-[21px] text-[40px] font-light leading-[56px] text-[#333]">Linguistic Positive and Negative Ratings</T>
      <div className="mt-[24px] flex h-[33px] w-[207px] justify-end font-semibold text-[#333]"><T w={65} className="-mt-[1px]">Name</T></div>
      <div className="relative flex h-[924px] shrink-0 pl-[18px]">
        <div className="w-[200px] shrink-0 border-t-2 border-[#cccccc]">
          <div className="h-[915px] overflow-hidden pr-[11px]">
            <div className="-mt-[19px] flex flex-col">
              {ROWS.map((r, i) => (
                <div key={r[0]} className={"h-[40px] shrink-0 text-right leading-[40px] " + (i === 0 ? "translate-y-[1px]" : "")}>{r[0]}</div>
              ))}
            </div>
          </div>
        </div>
        <Pane idx={1} scale={7547} barScale={7547} ticks={[0.02, 0.04, 0.06, 0.08]} color="bg-[#b0789f]" className="w-[689px] border-l border-t-2 border-[#cccccc]" />
        <Pane idx={2} scale={4238} barScale={4220} ticks={[0.02, 0.04, 0.06, 0.08, 0.1, 0.12, 0.14, 0.16]} color="bg-[#59a14e]" className="w-[692px] border-x-2 border-t-2 border-[#cccccc]" />
        <div className="ml-[7px] flex h-[915px] w-[34px] shrink-0 justify-center border-x-2 border-[#ebebeb] bg-[#fafafa] pt-[159px]">
          <div className="h-[114px] w-[16px] rounded-full bg-[#c1c1c1]" />
        </div>
        <div className="absolute left-[18px] top-[913px] h-[2px] w-[1580px] bg-[#cccccc]" />
      </div>
      <div className="flex shrink-0 pl-[218px]">
        <Axis title="Neg" className="w-[689px] border-l border-[#cccccc]" labels={[[27, "0.00"], [151, "0.02"], [301, "0.04"], [453, "0.06"], [603, "0.08"]]} />
        <Axis title="Pos" className="w-[692px] border-x-2 border-[#cccccc]" labels={[[27, "0.00"], [83, "0.02"], [168, "0.04"], [253, "0.06"], [338, "0.08"], [423, "0.10"], [507, "0.12"], [593, "0.14"], [661, "0.16"]]} />
      </div>
    </div>
  );
}

/* ---------- bottom bars ---------- */

function TabIcon({ kind }) {
  return (
    <div className="flex w-[64px] shrink-0 items-center justify-center border-r-2 border-[#cacaca] pl-[2px]">
      <svg width="32" height="32" viewBox="0 0 32 32" fill="none" stroke={G} strokeWidth="2">
        {kind === 0 && <path d="M15 25H3Q2 25 2 24V4Q2 3 3 3H23Q24 3 24 4V16M8 15v5M13 9v11M18 12v6" />}
        {kind === 1 && <path d="M15 25H4Q3 25 3 24V4Q3 3 4 3H23Q24 3 24 4V16M13 3V25M3 14H24" />}
        {kind === 2 && <path d="M13 27V8L3 3V23L13 27M13 8L24 3V17" strokeLinejoin="round" />}
        <path d="M24 17v14M17 24h14" strokeWidth="4.500" />
      </svg>
    </div>
  );
}

function SheetTabs() {
  return (
    <div className="flex h-[62px] shrink-0 border-b-2 border-t border-[#cacaca] bg-[#e5e5e5] text-[24px] leading-[58px] text-[#555]">
      <div className="flex w-[262px] shrink-0 items-center border-r-2 border-[#cacaca] pl-[20px] pt-[1px]">
        <svg width="16" height="24" viewBox="0 0 16 24" fill="none" stroke={G} strokeWidth="2" className="-mt-[2px]">
          <ellipse cx="8" cy="6" rx="7" ry="4.500" />
          <path d="M1 6V18q1 4.500 7 4.500T15 18V6" />
        </svg>
        <T w={134} className="ml-[13px]">Data Source</T>
      </div>
      <div className="flex w-[116px] shrink-0 items-center border-r-2 border-[#cacaca] bg-[#fafafa] pl-[13px]"><T w={86} className="font-bold">Sheet 1</T></div>
      <TabIcon kind={0} />
      <TabIcon kind={1} />
      <TabIcon kind={2} />
    </div>
  );
}

const Div = ({ className }) => <div className={"h-[40px] w-[2px] shrink-0 bg-[#cacaca] " + className} />;

function StatusBar() {
  return (
    <div className="flex h-[40px] shrink-0 items-center bg-[#ebebeb] text-[21px] leading-[40px] text-black">
      <T w={99} className="ml-[25px]">372 marks</T>
      <T w={212} className="ml-[33px]">186 rows by 2 columns</T>
      <T w={190} className="ml-[32px]">SUM(Neg): 9.11500</T>
      <Div className="ml-[1075px]" />
      <Div className="ml-[252px]" />
      <Div className="ml-[52px]" />
      <Div className="ml-[52px]" />
      <Div className="ml-[92px]" />
      <svg width="110" height="16" viewBox="0 0 110 16" fill="#bdbdbd" className="ml-[16px] shrink-0">
        <path d="M0 1h2v14H0zM12 1v14L4 8zM42 1v14l-8-7zM67 1l8 7-8 7zM97 1l8 7-8 7zM107 1h2v14h-2z" />
      </svg>
      <Div className="ml-[15px]" />
      <svg width="106" height="22" viewBox="0 0 106 22" fill="#bdbdbd" className="ml-[16px] shrink-0">
        <path d="M0 0h6v6H0zM8 0h6v6H8zM16 0h6v6H16zM0 8h6v6H0zM8 8h6v6H8zM16 8h6v6H16zM0 16h6v6H0zM8 16h6v6H8zM16 16h6v6H16zM42 0h22v14H42zM42 16h6v6H42zM50 16h6v6H50zM58 16h6v6H58z" />
        <rect x="84" y="0" width="22" height="22" fill="#636363" />
      </svg>
    </div>
  );
}

/* ---------- main window ---------- */

function MainWindow() {
  return (
    <div className="absolute left-[134px] top-[46px] flex h-[1554px] w-[2418px] flex-col overflow-hidden rounded-[10px] bg-[#f4f4f4] shadow-[0_0_0_1px_rgba(0,0,0,0.3),0_4px_14px_rgba(0,0,0,0.35)]">
      <div className="flex h-[44px] shrink-0 items-center border-b-2 border-[#b5afb5] bg-[linear-gradient(180deg,#eae8eb,#d1cfd2)] pt-[2px]">
        <div className="ml-[16px] flex shrink-0 gap-[16px]">
          <div className="size-[24px] rounded-full border border-[#e14a44] bg-[#fc605c]" />
          <div className="size-[24px] rounded-full border border-[#dea035] bg-[#fdbc40]" />
          <div className="size-[24px] rounded-full border border-[#27aa35] bg-[#34c84a]" />
        </div>
        <div className="ml-[841px] flex h-[29px] w-[30px] shrink-0 items-center justify-center bg-[#f6f6f6] shadow-[0_1px_1px_rgba(0,0,0,0.3)]">
          <Pluses colors={["#3a86bb"]} className="size-[27px]" />
        </div>
        <T w={451} className="ml-[10px] mt-[1px] font-['Inter'] text-[26px] leading-[38px] text-[#333]">Tableau - Book1 actup active analysis</T>
      </div>
      <Toolbar />
      <div className="flex h-[1328px] shrink-0">
        <AnalyticsPane />
        <Cards />
        <div className="ml-[12px] flex w-[1654px] shrink-0 flex-col gap-[12px]">
          <Shelf label="Columns" w={96} icon={<path d="M3 1h4v4H3zM11 1h4v4h-4zM19 1h4v4h-4zM3 7h4v18H3zM11 7h4v18h-4zM19 7h4v18h-4z" />}>
            <Pill w={115} className="bg-[#00b180]">SUM(Neg)</Pill>
            <Pill w={110} className="bg-[#00b180]">SUM(Pos)</Pill>
          </Shelf>
          <Shelf label="Rows" w={57} icon={<path d="M1 3h4v4H1zM7 3h18v4H7zM1 11h4v4H1zM7 11h18v4H7zM1 19h4v4H1zM7 19h18v4H7z" />}>
            <Pill w={65} className="bg-[#4996b2]">Name</Pill>
          </Shelf>
          <Chart />
        </div>
      </div>
      <SheetTabs />
      <StatusBar />
    </div>
  );
}

export default function App() {
  return (
    <div className="relative h-[1600px] w-[2560px] overflow-hidden bg-[linear-gradient(180deg,#b01030_0px,#c00a28_400px,#b5321c_510px,#b8603a_540px,#9fb0a4_570px,#a9aea8_800px,#77758f_860px,#a9a99c_910px,#b0ae9e_1140px,#12306a_1165px,#1c3a70_1185px,#b3b0a4_1220px,#a6a69c_1430px,#173366_1460px,#1b3a70_1480px,#7fb6b4_1500px,#94c9c8_1600px)] font-['Roboto']">
      <div className="absolute left-0 top-[44px] h-[70px] w-[120px] bg-[linear-gradient(112deg,#d6d8cc_0px,#e0e0d4_50px,#cfcfc0_68px,#b8152f_76px,#b0102c_120px)]" />
      <div className="absolute right-0 top-[44px] flex h-[1556px] w-[30px] flex-col bg-[#bdbdbd]">
        <div className="h-[44px] bg-[#ececec]" />
        <div className="h-[28px] border-b-2 border-[#8a8a8a] bg-[#dadada]" />
        <div className="h-[66px] border-b-2 border-[#7c7c7c] bg-[#d0d0d0]" />
        <div className="h-[28px] border-b-2 border-[#aaaaaa] bg-[#cacaca]" />
        <div className="mt-[423px] self-end text-[16px] font-medium leading-[13px] text-[#222]">g</div>
        <div className="self-end text-[16px] font-medium leading-[13px] text-[#222]">a</div>
      </div>
      <BackWindow />
      <Dock />
      <MainWindow />
      <MenuBar />
    </div>
  );
}
